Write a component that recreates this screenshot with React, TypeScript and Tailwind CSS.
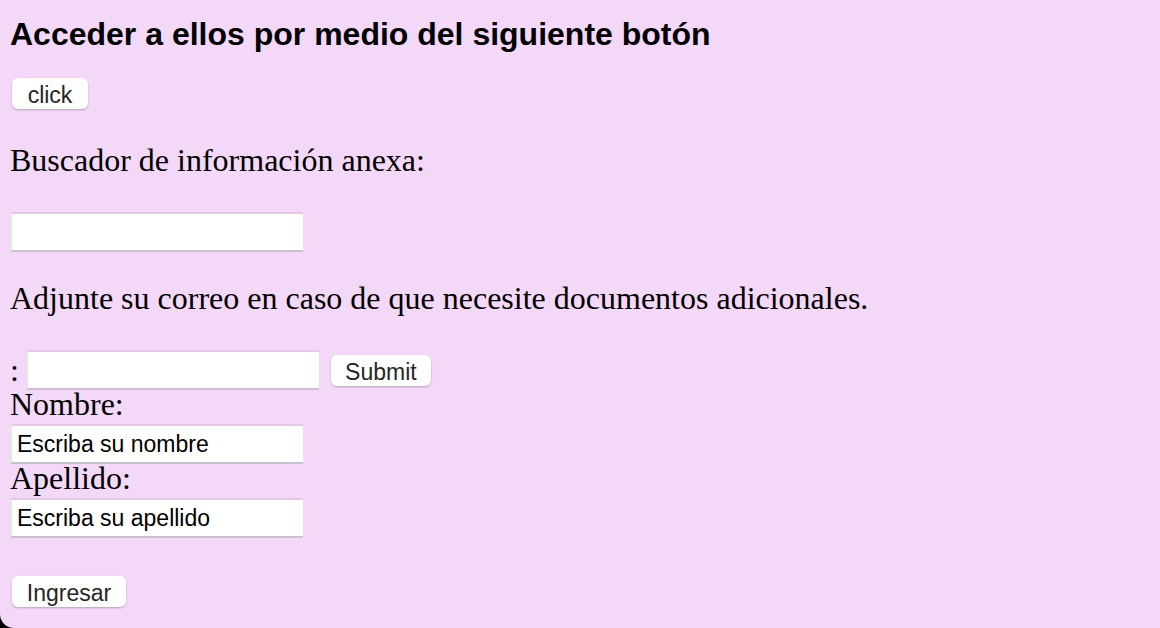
import React from "react";

const serif = "font-['Liberation_Serif','Times_New_Roman',serif]";
const sans = "font-['Liberation_Sans',Arial,sans-serif]";

const btn =
  "flex h-[31px] items-center justify-center rounded-[6px] bg-white pt-[4px] text-[23px] leading-none text-[#262626] shadow-[0_1px_2px_rgba(0,0,0,0.25)] " +
  sans;

const field =
  "h-[40px] w-[293px] shrink-0 bg-white border-t-2 border-l-2 border-t-[#e3c9e6] border-l-[#ece2ee] border-b-2 border-b-[#c9c1cb] px-[5px] text-[23px] text-black outline-none " +
  sans;

export default function App() {
  return (
    <div className="h-[628px] w-[1160px] bg-black">
      <div className={"flex h-full w-full flex-col items-start rounded-bl-[14px] bg-[#f4d8f8] px-[10px] text-black " + serif}>
        <h2 className={"mt-[16px] text-[32px] font-bold leading-[36px] " + sans}>
          Acceder a ellos por medio del siguiente botón
        </h2>
        <button className={"ml-[2px] mt-[26px] w-[76px] " + btn}>click</button>
        <p className="mt-[33px] text-[32px] leading-[36px]">Buscador de información anexa:</p>
        <input className={"mt-[34px] " + field} />
        <p className="mt-[28px] text-[32px] leading-[36px]">
          Adjunte su correo en caso de que necesite documentos adicionales.
        </p>
        <div className="mt-[34px] flex items-center">
          <span className="text-[32px] leading-[36px]">:</span>
          <input className={"ml-[7px] " + field} />
          <button className={"ml-[12px] w-[100px] " + btn}>Submit</button>
        </div>
        <label className="mt-[1px] text-[32px] leading-[26px]">Nombre:</label>
        <input className={"mt-[7px] " + field} defaultValue="Escriba su nombre" />
        <label className="mt-[1px] text-[32px] leading-[26px]">Apellido:</label>
        <input className={"mt-[7px] " + field} defaultValue="Escriba su apellido" />
        <button className={"ml-[2px] mt-[38px] w-[114px] " + btn}>Ingresar</button>
      </div>
    </div>
  );
}
